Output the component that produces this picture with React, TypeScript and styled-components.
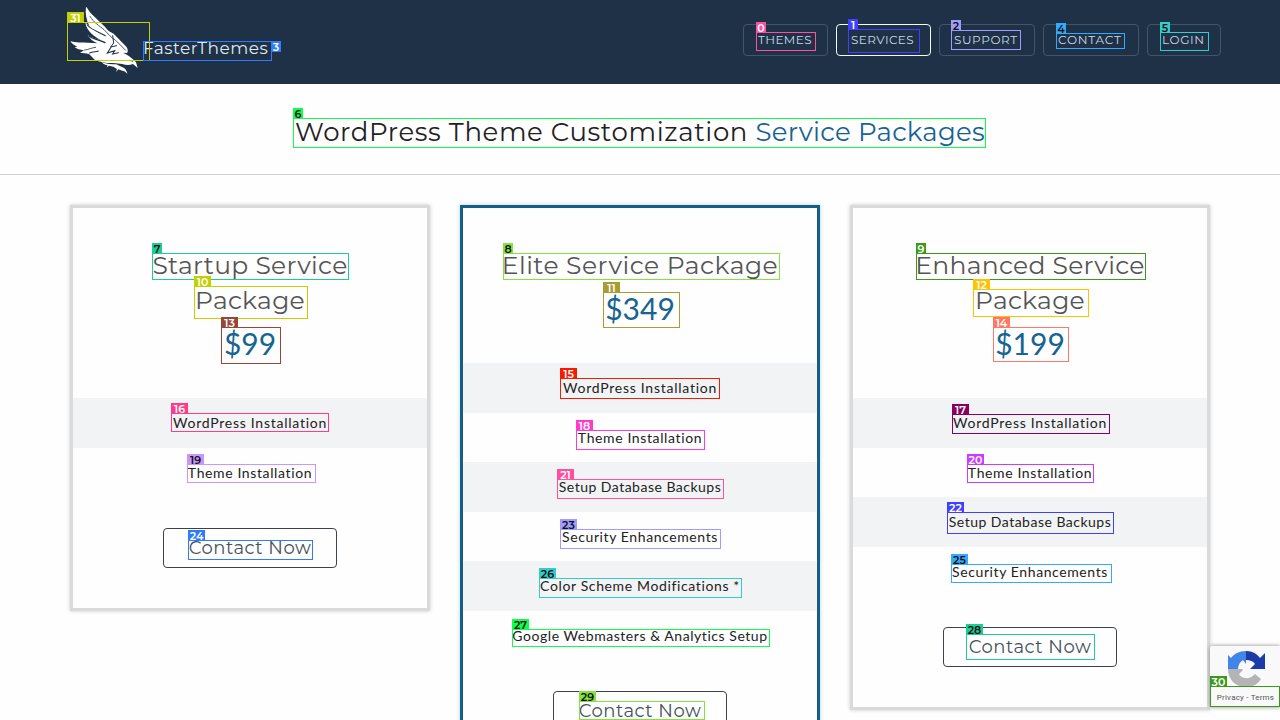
import React from "react";
import styled, { createGlobalStyle } from "styled-components";

const Global = createGlobalStyle`
  * { box-sizing: border-box; }
  html, body { margin: 0; height: 720px; overflow: hidden; background: #fefefe; }
`;

const heading = `"Montserrat", "Inter", sans-serif`;
const body = `"Lato", sans-serif`;

const Page = styled.div`
  position: relative;
  width: 1280px;
  height: 720px;
  overflow: hidden;
  background: #fefefe;
  font-family: ${body};
`;

const Header = styled.header`
  display: flex;
  justify-content: space-between;
  align-items: flex-start;
  height: 84px;
  padding: 0 59px 0 67px;
  background: #1e3147;
`;

const Brand = styled.a`
  display: flex;
  align-items: flex-start;
  color: #dfeaf4;
  font: 400 17px/20px ${heading};
  letter-spacing: 0.45px;
  white-space: nowrap;
`;

const BrandName = styled.span`
  padding-top: 38px;
`;

const Nav = styled.nav`
  display: flex;
  gap: 8px;
  padding-top: 24px;
`;

const NavItem = styled.a<{ $w: number; $ls: number; $active?: boolean }>`
  width: ${(p) => p.$w}px;
  height: 32px;
  padding-left: 14px;
  border: 1px solid ${(p) => (p.$active ? "#f4f9fc" : "#43556a")};
  border-radius: 4px;
  color: #c9d8e8;
  font: 400 12px/30px ${heading};
  letter-spacing: ${(p) => p.$ls}px;
  white-space: nowrap;
`;

const TitleBar = styled.section`
  display: flex;
  justify-content: center;
  height: 91px;
  padding-top: 32px;
  border-bottom: 1px solid #d3d3d3;
`;

const Title = styled.h1`
  margin: 0;
  color: #222;
  font: 400 26px/32px ${heading};
  letter-spacing: 0.62px;
  white-space: nowrap;
`;

const Accent = styled.span`
  color: #176391;
  letter-spacing: 0.25px;
`;

const Cards = styled.main`
  display: flex;
  align-items: flex-start;
  gap: 30px;
  padding: 30px 70px 0;
`;

const Card = styled.article<{ $featured?: boolean; $h: number }>`
  width: 360px;
  height: ${(p) => p.$h}px;
  flex: none;
  border: 3px solid ${(p) => (p.$featured ? "#145f87" : "#dadada")};
  box-shadow: 0 0 4px ${(p) => (p.$featured ? "#b9d4d8" : "#ccc")};
  background: #fefefe;
  text-align: center;
`;

const CardHead = styled.div`
  padding: 40px 0 36px;
`;

const CardTitle = styled.h2`
  margin: 0;
  color: #555;
  font: 400 25px/35px ${heading};
`;

const TitleLine = styled.span<{ $ls: number }>`
  display: block;
  letter-spacing: ${(p) => p.$ls}px;
  white-space: nowrap;
`;

const Price = styled.div`
  height: 44px;
  color: #176391;
  font: 400 30px/50px ${body};
`;

const Features = styled.ul`
  margin: 0;
  padding: 0;
  list-style: none;
`;

const Feature = styled.li<{ $ls: number }>`
  height: 49.5px;
  color: #222;
  font: 400 14px/50px ${body};
  letter-spacing: ${(p) => p.$ls}px;
  font-variant-ligatures: none;
  &:nth-child(odd) { background: #f2f3f5; }
`;

const ContactButton = styled.a`
  display: block;
  width: 174px;
  height: 40px;
  margin: 31px auto 0;
  border: 1px solid #3c4248;
  border-radius: 4px;
  color: #45525a;
  font: 400 18px/38px ${heading};
  letter-spacing: 0.5px;
  white-space: nowrap;
`;

const CaptchaBadge = styled.aside`
  position: absolute;
  right: 0;
  top: 646px;
  width: 70px;
  height: 61px;
  display: flex;
  flex-direction: column;
  align-items: center;
  gap: 3px;
  padding: 4px 0 0 1px;
  background: #f9f9fa;
  border-radius: 2px 0 0 2px;
  box-shadow: 0 0 4px #888;
  color: #555;
  font: 400 8px/14px Roboto, sans-serif;
  letter-spacing: 0.2px;
  white-space: nowrap;
`;

const MarkBox = styled.div<{ $b: number[]; $c: string }>`
  position: absolute;
  left: ${(p) => p.$b[0]}px;
  top: ${(p) => p.$b[1]}px;
  width: ${(p) => p.$b[2] - p.$b[0]}px;
  height: ${(p) => p.$b[3] - p.$b[1]}px;
  border: 1px solid ${(p) => p.$c};
`;

const MarkLabel = styled.span<{ $c: string; $dark?: boolean; $side?: boolean; $wide: boolean }>`
  position: absolute;
  left: ${(p) => (p.$side ? "127px" : "-1px")};
  top: ${(p) => (p.$side ? "-1px" : "-11px")};
  width: ${(p) => (p.$wide ? 17 : 10)}px;
  height: ${(p) => (p.$side ? 11 : 10)}px;
  background: ${(p) => p.$c};
  color: ${(p) => (p.$dark ? "#111" : "#fff")};
  font: 600 11px/12px ${heading};
  text-align: center;
`;

type MarkData = { n: number; b: number[]; c: string; dark?: boolean };

const marks: MarkData[] = [
  { n: 31, b: [67, 22, 150, 61], c: "#c3d100" },
  { n: 3, b: [143, 41, 272, 61], c: "#2f7bff" },
  { n: 0, b: [756, 32, 816, 51], c: "#ff4fa0" },
  { n: 1, b: [848, 29, 920, 53], c: "#4040ff" },
  { n: 2, b: [951, 30, 1021, 50], c: "#a09cff", dark: true },
  { n: 4, b: [1056, 33, 1125, 49], c: "#33aaff", dark: true },
  { n: 5, b: [1160, 32, 1209, 51], c: "#33cccc", dark: true },
  { n: 6, b: [293, 118, 986, 148], c: "#10ff4c", dark: true },
  { n: 7, b: [152, 253, 349, 280], c: "#1ecc96", dark: true },
  { n: 8, b: [503, 253, 780, 280], c: "#86e23e", dark: true },
  { n: 9, b: [916, 253, 1146, 280], c: "#3a9a1a" },
  { n: 10, b: [194, 286, 308, 319], c: "#c3d100" },
  { n: 11, b: [603, 292, 680, 328], c: "#aa9c34" },
  { n: 12, b: [973, 289, 1089, 317], c: "#ffc200" },
  { n: 13, b: [221, 327, 281, 364], c: "#984638" },
  { n: 14, b: [993, 327, 1069, 362], c: "#ff7766" },
  { n: 15, b: [560, 378, 720, 399], c: "#f51b00" },
  { n: 16, b: [171, 413, 329, 432], c: "#ff3b8a" },
  { n: 17, b: [952, 414, 1110, 434], c: "#8a0060" },
  { n: 18, b: [576, 430, 705, 450], c: "#ff3bce" },
  { n: 19, b: [187, 464, 316, 483], c: "#c896ff", dark: true },
  { n: 20, b: [967, 464, 1094, 483], c: "#cc3bff" },
  { n: 21, b: [557, 479, 724, 499], c: "#ff4fa0" },
  { n: 22, b: [947, 512, 1114, 534], c: "#4040ff" },
  { n: 23, b: [560, 529, 721, 549], c: "#a09cff", dark: true },
  { n: 24, b: [188, 540, 313, 560], c: "#2f7bff" },
  { n: 25, b: [951, 564, 1112, 583], c: "#33aaff", dark: true },
  { n: 26, b: [539, 578, 742, 598], c: "#33cccc", dark: true },
  { n: 27, b: [512, 629, 770, 647], c: "#10ff4c", dark: true },
  { n: 28, b: [966, 634, 1095, 660], c: "#1ecc96", dark: true },
  { n: 29, b: [579, 701, 705, 720], c: "#86e23e", dark: true },
  { n: 30, b: [1210, 686, 1280, 707], c: "#3a9a1a" },
];

const navItems = [
  { text: "THEMES", w: 85, ls: 0.4 },
  { text: "SERVICES", w: 95, ls: 0.4 },
  { text: "SUPPORT", w: 96, ls: 0.6 },
  { text: "CONTACT", w: 96, ls: 0.8 },
  { text: "LOGIN", w: 74, ls: 0.6 },
];

type FeatureData = { text: string; ls: number };

const all: FeatureData[] = [
  { text: "WordPress Installation", ls: 0.74 },
  { text: "Theme Installation", ls: 0.62 },
  { text: "Setup Database Backups", ls: 0.49 },
  { text: "Security Enhancements", ls: 0.6 },
  { text: "Color Scheme Modifications *", ls: 0.63 },
  { text: "Google Webmasters & Analytics Setup", ls: 0.55 },
];

type Plan = { lines: string[]; ls: number; price: string; features: FeatureData[]; featured?: boolean; h: number };

const plans: Plan[] = [
  { lines: ["Startup Service", "Package"], ls: 0.3, price: "$99", features: all.slice(0, 2), h: 406 },
  { lines: ["Elite Service Package"], ls: 0.5, price: "$349", features: all, featured: true, h: 600 },
  { lines: ["Enhanced Service", "Package"], ls: 0.3, price: "$199", features: all.slice(0, 4), h: 505 },
];

const Eagle = () => (
  <svg width="76" height="84" viewBox="51 0 228 252" aria-hidden="true">
    <g fill="#fff">
      <path d="M108 20C113 25 117 32 121 38L166 82C173 92 181 97 191 101L229 140C234 147 235 154 231 159L219 158L228 163C240 170 249 178 258 187L263 204L249 192C237 197 226 195 217 192L190 189C173 190 151 187 134 179L118 163C108 158 99 160 90 158L102 151C90 150 80 146 74 142L82 140C72 136 65 130 61 124C78 129 96 127 115 128L142 130C130 125 119 116 113 105C124 113 142 118 157 122C131 111 108 91 106 66C110 72 114 75 118 78C109 60 105 40 108 20Z" />
      <path d="M155 187C170 192 186 193 199 193L216 201C226 205 230 210 232 222C227 215 222 212 217 212L205 208L198 216L201 207L190 200L177 197L170 202L173 196C166 195 160 192 155 187Z" />
    </g>
    <g fill="none" stroke="#1e3147" strokeLinecap="round">
      <path d="M120 49C132 69 148 77 162 89C174 101 183 113 197 121L227 151" strokeWidth="2.4" />
      <path d="M112 75C126 91 149 97 166 107" strokeWidth="3.2" />
      <path d="M117 108C130 119 151 119 165 128" strokeWidth="4" />
      <path d="M188 107L191 129L182 141L200 137" strokeWidth="3" />
      <path d="M183 142L172 159L194 152L188 162L205 158" strokeWidth="3.2" />
      <path d="M119 159C129 153 137 157 145 153" strokeWidth="3.2" />
      <path d="M104 150C116 149 125 143 137 142" strokeWidth="2.4" />
      <path d="M238 181L248 184" strokeWidth="2.4" />
    </g>
  </svg>
);

const Captcha = () => (
  <svg width="38" height="38" viewBox="0 0 38 38" aria-hidden="true">
    <path d="M19 1C12 1 7 4 4 8L1 5V19H11C11 15 13 12 16 10L19 14Z" fill="#4285e8" />
    <path d="M19 1C26 1 30 4 33 8L38 3V19H23L28 14C26 11 23 10 19 10Z" fill="#1c3aa9" />
    <path d="M1 19C1 30 9 37 19 37C26 37 31 34 34 29L28 24C23 30 14 29 12 24L16 20L15 19Z" fill="#b4b4b6" />
  </svg>
);

export default function App() {
  return (
    <Page>
      <Global />
      <Header>
        <Brand>
          <Eagle />
          <BrandName>FasterThemes</BrandName>
        </Brand>
        <Nav>
          {navItems.map((i) => (
            <NavItem key={i.text} $w={i.w} $ls={i.ls} $active={i.text === "SERVICES"}>{i.text}</NavItem>
          ))}
        </Nav>
      </Header>
      <TitleBar>
        <Title>WordPress Theme Customization <Accent>Service Packages</Accent></Title>
      </TitleBar>
      <Cards>
        {plans.map((p) => (
          <Card key={p.price} $featured={p.featured} $h={p.h}>
            <CardHead>
              <CardTitle>
                {p.lines.map((text) => <TitleLine key={text} $ls={p.ls}>{text}</TitleLine>)}
              </CardTitle>
              <Price>{p.price}</Price>
            </CardHead>
            <Features>
              {p.features.map((f) => <Feature key={f.text} $ls={f.ls}>{f.text}</Feature>)}
            </Features>
            <ContactButton>Contact Now</ContactButton>
          </Card>
        ))}
      </Cards>
      <CaptchaBadge>
        <Captcha />
        <span>Privacy - Terms</span>
      </CaptchaBadge>
      {marks.map((m) => (
        <MarkBox key={m.n} $b={m.b} $c={m.c}>
          <MarkLabel $c={m.c} $dark={m.dark} $side={m.n === 3} $wide={m.n > 9}>{m.n}</MarkLabel>
        </MarkBox>
      ))}
    </Page>
  );
}
